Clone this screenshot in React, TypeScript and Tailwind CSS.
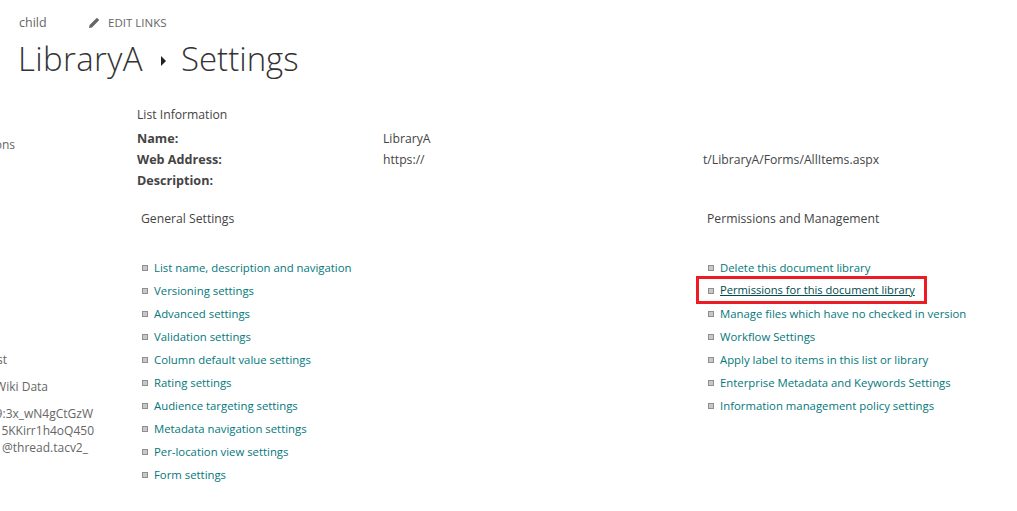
const GENERAL_LINKS = [
  'List name, description and navigation',
  'Versioning settings',
  'Advanced settings',
  'Validation settings',
  'Column default value settings',
  'Rating settings',
  'Audience targeting settings',
  'Metadata navigation settings',
  'Per-location view settings',
  'Form settings',
];

const PERMISSION_LINKS = [
  'Delete this document library',
  'Permissions for this document library',
  'Manage files which have no checked in version',
  'Workflow Settings',
  'Apply label to items in this list or library',
  'Enterprise Metadata and Keywords Settings',
  'Information management policy settings',
];

const SettingsLink = ({ label, active }: { label: string; active?: boolean }) => (
  <li className="relative flex h-[23px] items-center gap-[6px] pl-[5px] text-[11.35px]">
    <span className="h-[6px] w-[6px] shrink-0 border border-[#8f8f8f] bg-[#c8c8c8]" />
    <a
      href="#"
      className={active ? 'whitespace-nowrap text-[11.15px] text-[#004b50] underline' : 'whitespace-nowrap text-[#03787c]'}
    >
      {label}
    </a>
    {active && (
      <span className="absolute left-[-7px] top-[-3px] h-[28px] w-[231px] border-[3px] border-[#ed1c24]" />
    )}
  </li>
);

const NavLine = ({ text, className }: { text: string; className: string }) => (
  <div className={`flex justify-end whitespace-nowrap text-[#666666] ${className}`}>{text}</div>
);

export default function App() {
  return (
    <div className="h-[511px] w-[1017px] overflow-hidden bg-white font-['Open_Sans',sans-serif] text-[12.2px] text-[#444444]">
      {/* 상단 타이틀 */}
      <header className="pl-[19px] pt-[14px]">
        <div className="flex h-[18px] items-center text-[#666666]">
          <span className="w-[69px] text-[12.5px]">child</span>
          <svg viewBox="0 0 12 12" className="h-[12px] w-[12px] fill-[#666666]">
            <path d="M1 11l.6-3L8.4 1.2a.7.7 0 0 1 1 0l1.4 1.4a.7.7 0 0 1 0 1L4 10.4z" />
          </svg>
          <span className="ml-[8px] text-[11.5px]">EDIT LINKS</span>
        </div>
        <h1 className="mt-[2px] flex h-[49px] items-center text-[33px] font-light text-[#333333]">
          <span className="-ml-[1px] tracking-[0.35px]">LibraryA</span>
          <span className="ml-[18px] mr-[15px] mt-[4px] h-0 w-0 border-y-[5px] border-l-[5px] border-y-transparent border-l-[#222222]" />
          <span>Settings</span>
        </h1>
      </header>

      <div className="flex">
        {/* 왼쪽 내비게이션 (잘림) */}
        <nav className="w-[137px] shrink-0 text-[12px] leading-[17px]">
          <NavLine text="Conversations" className="mt-[53px] w-[15px]" />
          <NavLine text="Test" className="mt-[198px] w-[7px]" />
          <NavLine text="Wiki Data" className="mt-[10px] w-[48px]" />
          <NavLine text="19:3x_wN4gCtGzW" className="mt-[10px] w-[93px]" />
          <NavLine text="5KKirr1h4oQ450" className="w-[94px]" />
          <NavLine text="@thread.tacv2_" className="w-[88px]" />
        </nav>

        <main className="min-w-0 flex-1 pt-[23px]">
          <section>
            <h2 className="leading-[18px] text-[#444444]">List Information</h2>
            <div className="mt-[4px] grid grid-cols-[246px_320px_1fr] leading-[21px]">
              <span className="text-[12.6px] font-bold">Name:</span>
              <span className="col-span-2">LibraryA</span>
              <span className="text-[12.6px] font-bold">Web Address:</span>
              <span>https://</span>
              <span>t/LibraryA/Forms/AllItems.aspx</span>
              <span className="text-[12.6px] font-bold">Description:</span>
            </div>
          </section>

          <div className="mt-[19px] grid grid-cols-[566px_1fr]">
            <section>
              <h3 className="pl-[4px] leading-[18px]">General Settings</h3>
              <ul className="mt-[28px]">
                {GENERAL_LINKS.map((label) => (
                  <SettingsLink key={label} label={label} />
                ))}
              </ul>
            </section>
            <section>
              <h3 className="pl-[4px] leading-[18px]">Permissions and Management</h3>
              <ul className="mt-[28px]">
                {PERMISSION_LINKS.map((label) => (
                  <SettingsLink key={label} label={label} active={label.startsWith('Permissions')} />
                ))}
              </ul>
            </section>
          </div>
        </main>
      </div>
    </div>
  );
}
